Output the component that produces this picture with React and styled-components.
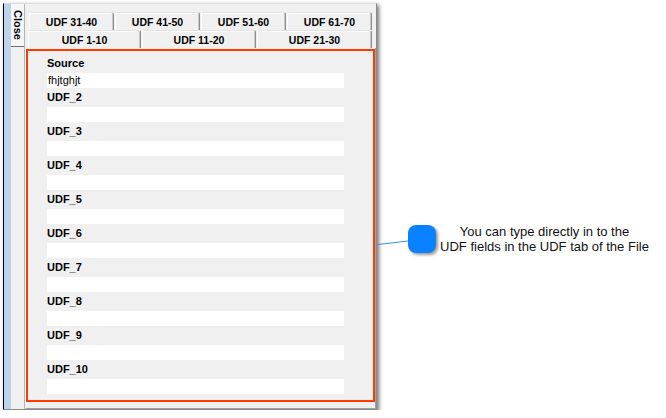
import React from 'react';
import styled, { createGlobalStyle } from 'styled-components';

const Global = createGlobalStyle`
  html, body { margin: 0; padding: 0; background: #fff; }
  body { font-family: "Liberation Sans", Arial, sans-serif; color: #000; }
`;

const Stage = styled.div`
  display: flex;
  align-items: flex-start;
  padding: 3px 0 0 3px;
`;

const Window = styled.div`
  box-sizing: border-box;
  width: 374px;
  height: 407px;
  display: flex;
  background: #f0f0f0;
  border-left: 1px solid #000;
  border-top: 1px solid #dcdcdc;
  border-right: 1px solid #8a8a8a;
  border-bottom: 1px solid #8a8a8a;
  box-shadow: 2px 2px 4px rgba(0, 0, 0, 0.55);
`;

const DockStrip = styled.div`
  width: 7px;
  background: #bcd3ee;
`;

const SideBar = styled.div`
  width: 13px;
  border-right: 1px solid #b4b4b4;
  display: flex;
  flex-direction: column;
`;

const CloseTab = styled.div`
  box-sizing: border-box;
  height: 43px;
  padding-top: 6px;
  background: #f7f7f7;
  border-bottom: 1px solid #6e6e6e;
  display: flex;
  justify-content: center;
`;

const VerticalText = styled.span`
  writing-mode: vertical-rl;
  font-weight: 700;
  font-size: 11px;
  line-height: 12px;
`;

const TabControl = styled.div`
  flex: 1;
  display: flex;
  flex-direction: column;
  padding-top: 8px;
`;

const TabRow = styled.div`
  display: flex;
  gap: 1px;
  height: 18px;
  padding-left: ${(p) => p.$indent}px;
`;

const Tab = styled.div`
  box-sizing: border-box;
  width: ${(p) => p.$w}px;
  height: 18px;
  display: flex;
  align-items: center;
  justify-content: center;
  background: #f0f0f0;
  border-top: 1px solid #e4e4e4;
  border-left: 1px solid #fff;
  border-right: 1px solid #8f8f8f;
  border-radius: 2px 2px 0 0;
  box-shadow: inset -1px 0 0 #c8c8c8, inset 0 1px 0 #fff;
  font-weight: 700;
  font-size: 10.5px;
`;

const Page = styled.div`
  flex: 1;
  box-sizing: border-box;
  padding-top: 1px;
  border-left: 1px solid #fff;
  border-right: 1px solid #a0a0a0;
  border-bottom: 1px solid #a0a0a0;
`;

const Highlight = styled.div`
  box-sizing: border-box;
  width: 349px;
  height: 353px;
  border: 2px solid #ff3a00;
  padding: 3px 0 0 19px;
  display: flex;
  flex-direction: column;
`;

const Field = styled.div`
  display: flex;
  flex-direction: column;
`;

const FieldLabel = styled.div`
  font-weight: 700;
  font-size: 11px;
  line-height: 19px;
  height: 19px;
`;

const FieldInput = styled.div`
  box-sizing: border-box;
  width: 297px;
  height: 15px;
  background: #fff;
  padding-left: 1px;
  font-size: 11px;
  line-height: 15px;
`;

const Callout = styled.div`
  display: flex;
  align-items: center;
  height: 28px;
  margin-top: 222px;
`;

const Connector = styled.svg`
  display: block;
  width: 31px;
  height: 28px;
`;

const Marker = styled.div`
  width: 28px;
  height: 28px;
  border-radius: 8px;
  background: #0a82ff;
  box-shadow: 2px 2px 3px rgba(0, 0, 0, 0.4);
`;

const CalloutText = styled.div`
  width: 215px;
  margin-left: 1px;
  text-align: center;
  font-size: 13px;
  line-height: 15px;
  color: #111;
  white-space: nowrap;
`;

const row1 = [
  ['UDF 31-40', 85],
  ['UDF 41-50', 85],
  ['UDF 51-60', 85],
  ['UDF 61-70', 85],
];
const row2 = [
  ['UDF 1-10', 113],
  ['UDF 11-20', 114],
  ['UDF 21-30', 115],
];

const fields = [
  ['Source', 'fhjtghjt'],
  ['UDF_2', ''],
  ['UDF_3', ''],
  ['UDF_4', ''],
  ['UDF_5', ''],
  ['UDF_6', ''],
  ['UDF_7', ''],
  ['UDF_8', ''],
  ['UDF_9', ''],
  ['UDF_10', ''],
];

export default function App() {
  return (
    <>
      <Global />
      <Stage>
        <Window>
          <DockStrip />
          <SideBar>
            <CloseTab>
              <VerticalText>Close</VerticalText>
            </CloseTab>
          </SideBar>
          <TabControl>
            <TabRow $indent={4}>
              {row1.map(([t, w]) => (
                <Tab key={t} $w={w}>{t}</Tab>
              ))}
            </TabRow>
            <TabRow $indent={3}>
              {row2.map(([t, w]) => (
                <Tab key={t} $w={w}>{t}</Tab>
              ))}
            </TabRow>
            <Page>
              <Highlight>
                {fields.map(([label, value]) => (
                  <Field key={label}>
                    <FieldLabel>{label}</FieldLabel>
                    <FieldInput>{value}</FieldInput>
                  </Field>
                ))}
              </Highlight>
            </Page>
          </TabControl>
        </Window>
        <Callout>
          <Connector viewBox="0 0 31 28">
            <line x1="1" y1="19.5" x2="31" y2="16" stroke="#3a8ef0" strokeWidth="1" />
          </Connector>
          <Marker />
          <CalloutText>
            You can type directly in to the
            <br />
            UDF fields in the UDF tab of the File
          </CalloutText>
        </Callout>
      </Stage>
    </>
  );
}
